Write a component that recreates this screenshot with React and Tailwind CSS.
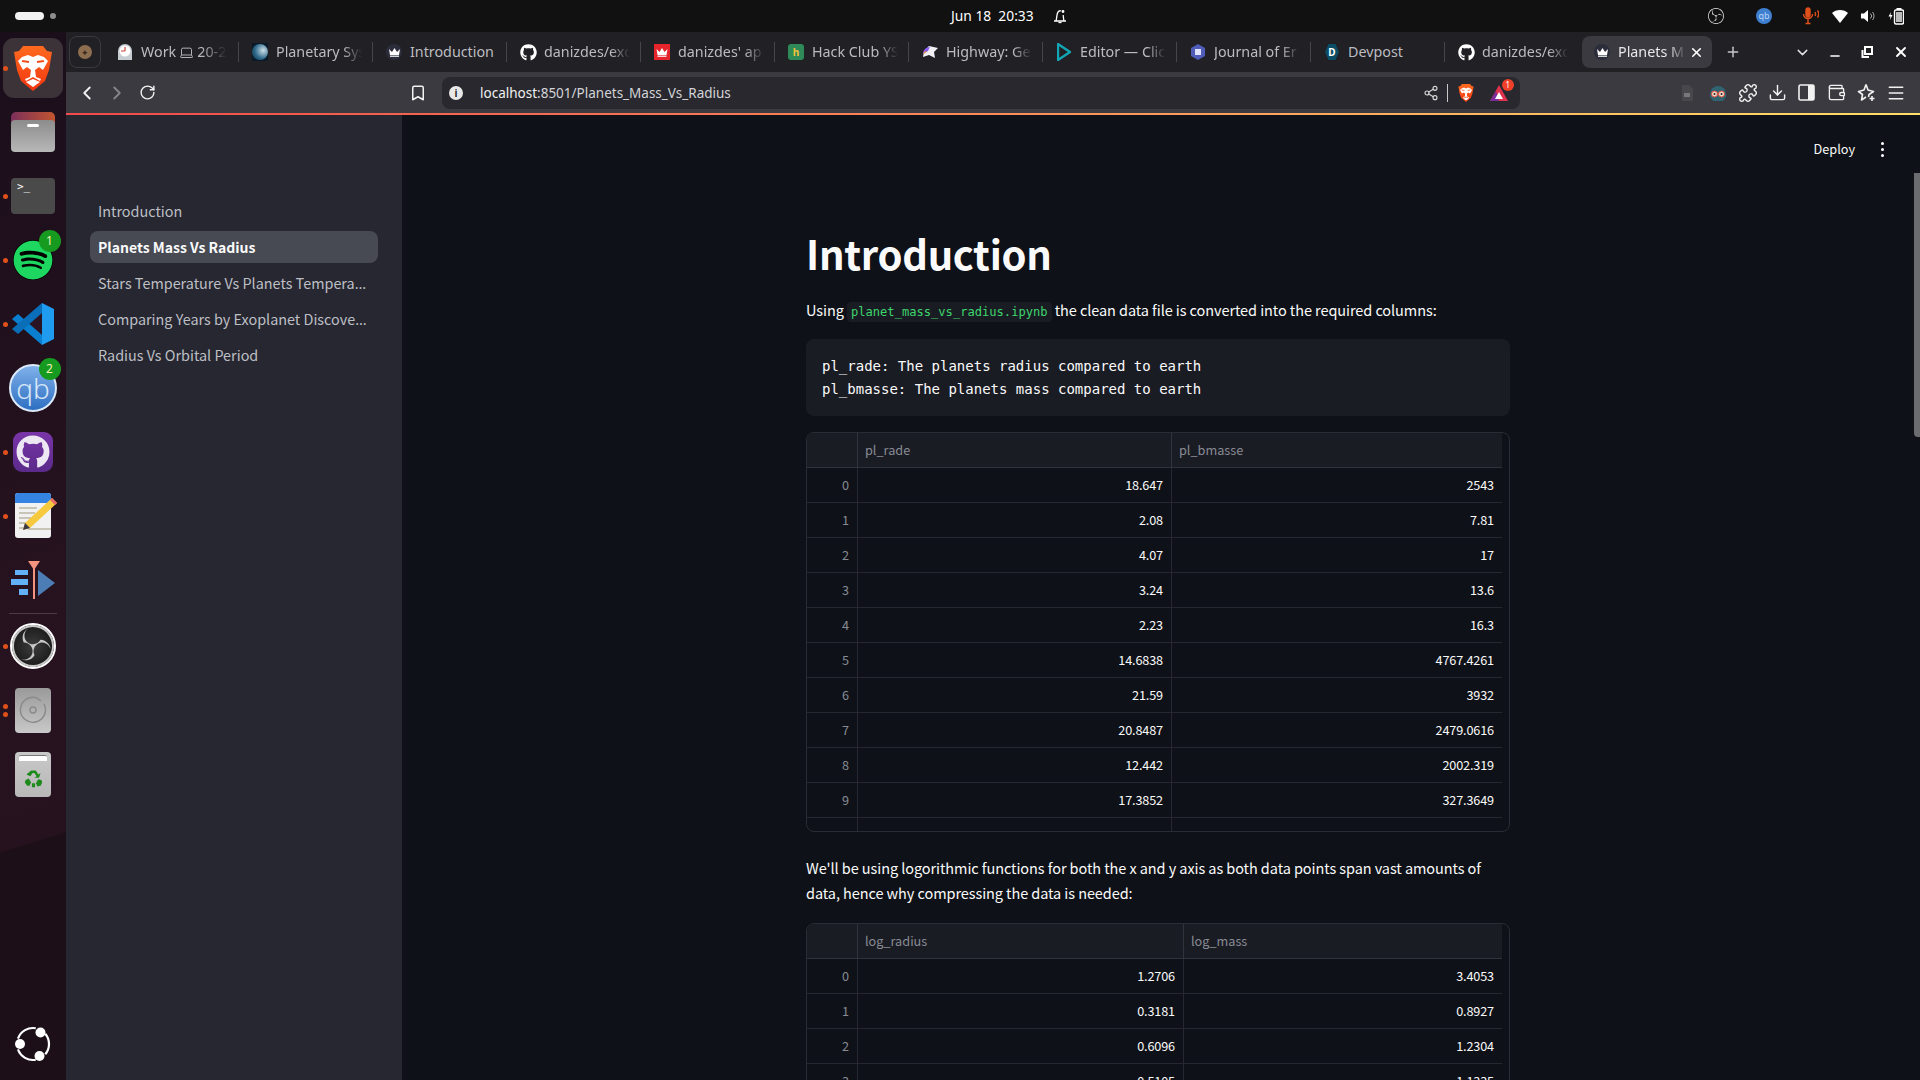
import {
  Bookmark, ChevronDown, ChevronLeft, ChevronRight, Download, Laptop, Menu, Minus, Plus, Puzzle, RotateCw, Share2, Wallet, X,
} from "lucide-react";
import { FaGithub, FaSpotify } from "react-icons/fa";
import { SiObsstudio } from "react-icons/si";

const uiFont = "font-['Noto_Sans','Open_Sans',sans-serif]";
const pageFont = "font-['Noto_Sans_CJK_SC','Noto_Sans',sans-serif]";
const monoFont = "font-['DejaVu_Sans_Mono','Liberation_Mono',monospace]";

const BraveLion = ({ size = 40 }) => (
  <svg width={size} height={size * 1.125} viewBox="0 0 40 45">
    <defs>
      <linearGradient id="brv" x1="0" y1="0" x2="0" y2="1">
        <stop offset="0" stopColor="#ff6a1f" />
        <stop offset="1" stopColor="#f2350f" />
      </linearGradient>
    </defs>
    <path d="M10 0H30L34 5L39 6L36 24L32 35L20 45L8 35L4 24L1 6L6 5Z" fill="url(#brv)" />
    <path d="M9 11L15 9L20 11L25 9L31 11L35 15L30 24L26 21L22 24L23 31L28 33L27 35L20 31L13 35L12 33L17 31L18 24L14 21L10 24L5 15Z" fill="#fff" />
    <path d="M13 36L20 33L27 36L20 41Z" fill="#fff" />
    <path d="M9 15L16 16M31 15L24 16" stroke="#f2501a" strokeWidth="2" />
  </svg>
);

const CrownIcon = ({ bg = "#2b2d3a" }) => (
  <span className="w-4 h-4 rounded-full flex items-center justify-center" style={{ backgroundColor: bg }}>
    <svg width="11" height="9" viewBox="0 0 11 9">
      <path d="M0 1L3 4L5.5 0L8 4L11 1L10 7H1Z" fill="#fff" />
      <rect x="1" y="7.6" width="9" height="1.2" fill="#fff" />
    </svg>
  </span>
);

const FavClock = () => (
  <svg width="16" height="18" viewBox="0 0 16 18">
    <path d="M1 17V8a7 7 0 0 1 14 0v9Z" fill="#c6cdd2" />
    <circle cx="8" cy="8" r="5.5" fill="#fff" />
    <path d="M8 8V4M8 8H4" stroke="#d0413c" strokeWidth="1.2" />
  </svg>
);

const FavPlanet = () => (
  <span className="w-4 h-[18px] bg-[#0b1a28] flex items-center justify-center">
    <span className="w-4 h-4 rounded-full bg-[radial-gradient(circle_at_70%_40%,#cfe0e6,#2f6b8c_55%,#0d2a3f)]" />
  </span>
);

const FavDanizdes = () => (
  <span className="w-4 h-4 bg-[#e5242b] flex items-center justify-center">
    <svg width="12" height="9" viewBox="0 0 11 9">
      <path d="M0 1L3 4L5.5 0L8 4L11 1L10 7H1Z" fill="#fff" />
      <rect x="1" y="7.6" width="9" height="1.2" fill="#fff" />
    </svg>
  </span>
);

const FavHackClub = () => (
  <span className="w-4 h-4 rounded-[3px] bg-[#2e8b57] flex items-center justify-center text-[#f3c23c] text-[10px] font-bold leading-none">h</span>
);

const FavHighway = () => (
  <svg width="16" height="14" viewBox="0 0 16 14">
    <path d="M7 1L16 3L12 7L13 13L7 10L1 12L2 6Z" fill="#f0f0f5" />
    <path d="M1 9C1 5 4 2 8 2L6 6L3 8Z" fill="#8b5cf6" />
    <path d="M1 9C2 7 3 6 5 6L3 8Z" fill="#f59e0b" />
  </svg>
);

const FavEditor = () => (
  <svg width="14" height="18" viewBox="0 0 14 18">
    <path d="M1 1L13 9L1 17Z" fill="none" stroke="#12a5b5" strokeWidth="2.4" strokeLinejoin="round" />
  </svg>
);

const FavJournal = () => (
  <svg width="14" height="16" viewBox="0 0 14 16">
    <path d="M7 0L14 4V12L7 16L0 12V4Z" fill="#4f5cb8" />
    <rect x="4" y="5" width="6" height="6" fill="#dfe3ff" />
  </svg>
);

const FavDevpost = () => (
  <span className="relative w-[14px] h-4 flex items-center justify-center">
    <svg className="absolute inset-0" width="14" height="16" viewBox="0 0 14 16">
      <path d="M3.5 0H10.5L14 8L10.5 16H3.5L0 8Z" fill="#0b4d66" />
    </svg>
    <span className="relative text-white text-[10px] font-bold leading-none">D</span>
  </span>
);

const tabs = [
  { title: "Planetary Sys", icon: <FavPlanet /> },
  { title: "Introduction", icon: <CrownIcon />, full: true },
  { title: "danizdes/exo", icon: <FaGithub size={17} color="#fff" /> },
  { title: "danizdes' ap", icon: <FavDanizdes /> },
  { title: "Hack Club YS", icon: <FavHackClub /> },
  { title: "Highway: Ge", icon: <FavHighway /> },
  { title: "Editor — Clic", icon: <FavEditor /> },
  { title: "Journal of Er", icon: <FavJournal /> },
  { title: "Devpost", icon: <FavDevpost />, full: true },
  { title: "danizdes/exo", icon: <FaGithub size={17} color="#fff" /> },
];

const sidebarLinks = [
  { label: "Introduction" },
  { label: "Planets Mass Vs Radius", active: true },
  { label: "Stars Temperature Vs Planets Tempera", cut: true },
  { label: "Comparing Years by Exoplanet Discove", cut: true },
  { label: "Radius Vs Orbital Period" },
];

const massRows = [
  ["18.647", "2543"], ["2.08", "7.81"], ["4.07", "17"], ["3.24", "13.6"], ["2.23", "16.3"],
  ["14.6838", "4767.4261"], ["21.59", "3932"], ["20.8487", "2479.0616"], ["12.442", "2002.319"], ["17.3852", "327.3649"],
];

const logRows = [
  ["1.2706", "3.4053"], ["0.3181", "0.8927"], ["0.6096", "1.2304"], ["0.5105", "1.1335"],
];

const DataTable = ({ headers, rows, firstCol }) => (
  <div className="h-[400px] w-full border border-[#2a2c35] rounded-lg overflow-hidden text-[12.7px] leading-[20px] flex flex-col">
    <div className="flex w-[695px] h-[35px] shrink-0 bg-[#1a1c24] border-b border-[#31333c] text-[#888b93]">
      <div className="w-[51px] border-r border-[#31333c]" />
      <div className={`${firstCol} border-r border-[#31333c] pl-[7px] flex items-center`}>{headers[0]}</div>
      <div className="flex-1 pl-[7px] flex items-center">{headers[1]}</div>
    </div>
    {rows.map((row, i) => (
      <div key={i} className="flex w-[695px] h-[35px] shrink-0 border-b border-[#262730] text-[#fafafa] tracking-[-0.15px]">
        <div className="w-[51px] border-r border-[#262730] px-2 flex items-center justify-end text-[#888b93]">{i}</div>
        <div className={`${firstCol} border-r border-[#262730] px-2 flex items-center justify-end`}>{row[0]}</div>
        <div className="flex-1 px-2 flex items-center justify-end">{row[1]}</div>
      </div>
    ))}
    <div className="flex w-[695px] flex-1">
      <div className="w-[51px] border-r border-[#262730]" />
      <div className={`${firstCol} border-r border-[#262730]`} />
    </div>
  </div>
);

const DockCell = ({ running, twoDots, children }) => (
  <div className="relative h-[64px] w-full shrink-0 flex items-center justify-center">
    {running && <span className="absolute left-[3px] top-1/2 -mt-[2.5px] w-[5px] h-[5px] rounded-full bg-[#e1501a]" />}
    {twoDots && (
      <span className="absolute left-[3px] top-1/2 -mt-[6.5px] flex flex-col gap-[3px]">
        <span className="w-[5px] h-[5px] rounded-full bg-[#e1501a]" />
        <span className="w-[5px] h-[5px] rounded-full bg-[#e1501a]" />
      </span>
    )}
    {children}
  </div>
);

const DockBadge = ({ n }) => (
  <span className={`absolute left-[38.5px] top-[2px] w-[22px] h-[22px] rounded-full bg-[#169a1f] text-[#f4f0b0] text-[12px] flex items-center justify-center ${uiFont}`}>{n}</span>
);

const Dock = () => (
  <div className="w-[66px] shrink-0 flex flex-col items-center pt-[4px] bg-[linear-gradient(163deg,#1b0e1b_0%,#27131f_60%,#25121e_76.7%,#1d0f17_76.9%,#1d0f17_100%)]">
    <DockCell running>
      <div className="w-[60px] h-[60px] rounded-[11px] bg-[#3b3338] flex items-center justify-center">
        <BraveLion />
      </div>
    </DockCell>
    <DockCell>
      <div className="relative w-[44px] h-[40px]">
        <div className="absolute top-0 left-0 w-[44px] h-[24px] rounded-t-[5px] bg-[linear-gradient(90deg,#7b2f5b,#c2552f)]" />
        <div className="absolute top-[8px] left-0 w-[44px] h-[32px] rounded-[4px] bg-[linear-gradient(#8c8c8c,#b8b8b8)] flex justify-center pt-[4px]">
          <span className="w-[12px] h-[3px] rounded-sm bg-white" />
        </div>
      </div>
    </DockCell>
    <DockCell running>
      <div className={`w-[44px] h-[36px] rounded-[4px] bg-[#4a4a4a] text-white text-[11px] leading-[14px] pl-[6px] pt-[2px] ${monoFont}`}>&gt;_</div>
    </DockCell>
    <DockCell running>
      <FaSpotify size={40} color="#1ed760" className="bg-black rounded-full" />
      <DockBadge n="1" />
    </DockCell>
    <DockCell running>
      <svg width="42" height="42" viewBox="0 0 42 42">
        <path d="M30 10L14 21L30 32Z" fill="#2a1424" />
        <path d="M6 11L30 32V42L0 16Z" fill="#0a7fcf" />
        <path d="M0 26L30 0V10L6 31Z" fill="#0a6fb8" />
        <path d="M30 0L42 6V36L30 42Z" fill="#1f9cf0" />
      </svg>
    </DockCell>
    <DockCell>
      <div className={`w-[48px] h-[48px] rounded-full border-2 border-[#dbe9f8] bg-[linear-gradient(#7fb0ea,#2e6fc2)] flex items-center justify-center text-[#d6e6f8] text-[28px] font-light leading-none ${uiFont}`}>qb</div>
      <DockBadge n="2" />
    </DockCell>
    <DockCell running>
      <div className="w-[40px] h-[40px] rounded-[9px] bg-[linear-gradient(#7a35a8,#5a2a8a)] flex items-center justify-center">
        <FaGithub size={34} color="#ece7f2" />
      </div>
    </DockCell>
    <DockCell running>
      <svg className="ml-[6px]" width="44" height="46" viewBox="0 0 44 46">
        <rect x="1" y="0" width="36" height="45" rx="3" fill="#f1f1f1" />
        <path d="M1 10V3a3 3 0 0 1 3-3h30a3 3 0 0 1 3 3v7Z" fill="#3584e4" />
        <path d="M5 15H23M5 20H21M5 25H19M5 30H15M5 35H12M14 36H37" stroke="#c9c5b6" strokeWidth="2" />
        <path d="M38 5L43 10L16 35L9 37L11 30Z" fill="#f7c93e" />
        <path d="M38 5L43 10L41 12L36 7Z" fill="#ed6a6a" />
        <path d="M9 37L11 30L16 35Z" fill="#3d3846" />
      </svg>
    </DockCell>
    <DockCell>
      <svg width="46" height="38" viewBox="0 0 46 38">
        <path d="M18 0H30L24 9Z" fill="#f4937e" />
        <rect x="23" y="2" width="2" height="36" fill="#f4937e" />
        <path d="M5 9H18V14H5ZM1 18H18V24H1ZM9 28H18V34H9Z" fill="#62b0f5" />
        <path d="M28 9L45 22L28 35Z" fill="#4d7db5" />
      </svg>
    </DockCell>
    <div className="mt-px w-[48px] h-px bg-[#4a3a46] shrink-0" />
    <DockCell running>
      <div className="w-[46px] h-[46px] rounded-full border-2 border-white bg-[radial-gradient(circle,#3c3c3c,#0d0d0d)] flex items-center justify-center">
        <SiObsstudio size={42} color="#c8c8c8" />
      </div>
    </DockCell>
    <DockCell twoDots>
      <div className="w-[36px] h-[45px] rounded-[4px] bg-[linear-gradient(#9a9a9a,#c8c8c8)] flex items-center justify-center">
        <svg width="28" height="28" viewBox="0 0 28 28" fill="none" stroke="#8a8a8a" strokeWidth="1.4">
          <path d="M18 2A12.5 12.5 0 1 0 25 8M18 2L22 5" />
          <circle cx="14" cy="14" r="3" />
        </svg>
      </div>
    </DockCell>
    <DockCell>
      <div className="w-[36px] h-[45px] rounded-[4px] bg-[linear-gradient(#c8c8c8,#b8b8b8)] flex flex-col items-center">
        <span className="w-[28px] h-[6px] mt-[3px] bg-white rounded-t-[2px] border-t border-[#777]" />
        <svg className="mt-[8px]" width="19" height="19" viewBox="0 0 24 24" fill="#1f8a1c">
          <path d="M9 2H15L18 7L21 5L19 11L13 11L16 9L13 5H11L8 9L3 7ZM2 14L6 12L9 17L7 21H4L1 17ZM22 14L18 13L15 18L17 22L21 21L23 17ZM10 18H14V23H10Z" />
        </svg>
      </div>
    </DockCell>
    <div className="mt-auto mb-[18px] w-[36px] h-[36px]">
      <svg width="36" height="36" viewBox="0 0 36 36" fill="none" stroke="#fff" strokeWidth="2.2">
        <path d="M2.96 12.53A16 16 0 0 1 20.78 2.24" />
        <path d="M30.26 7.71A16 16 0 0 1 30.26 28.29" />
        <path d="M20.78 33.76A16 16 0 0 1 2.96 23.47" />
        <circle cx="5" cy="18" r="5" fill="#fff" stroke="none" />
        <circle cx="25.5" cy="6.5" r="5" fill="#fff" stroke="none" />
        <circle cx="24.5" cy="30" r="5" fill="#fff" stroke="none" />
      </svg>
    </div>
  </div>
);

const TopBar = () => (
  <div className={`h-8 shrink-0 bg-[#111111] flex items-center text-white ${uiFont}`}>
    <div className="w-[66px] flex items-center pl-[15px] gap-[6px]">
      <span className="w-[29px] h-[8px] rounded-full bg-[#f2f2f2]" />
      <span className="w-[6px] h-[6px] rounded-full bg-[#8c8c8c]" />
    </div>
    <div className="ml-[885px] w-[84px] text-[13.8px] leading-[20px] whitespace-pre">Jun 18  20:33</div>
    <svg className="ml-[17px]" width="16" height="16" viewBox="0 0 16 16" fill="none" stroke="#fff" strokeWidth="1.3">
      <path d="M2 13H14M4 13C5 10 4.5 6 6 4C7 2.6 8 2.5 9 3M12 13C11.4 11 11.4 9 11.2 7" />
      <circle cx="11" cy="3.5" r="0.8" fill="#fff" />
      <path d="M6.5 14.5H9.5" />
    </svg>
    <SiObsstudio className="ml-[640px]" size={16} color="#e8e8e8" />
    <span className="ml-[32px] w-4 h-4 rounded-full bg-[#3f7fd0] text-[#b9d4f3] text-[9px] flex items-center justify-center">qb</span>
    <svg className="ml-[29px]" width="18" height="18" viewBox="0 0 18 18" fill="none" stroke="#e1501a" strokeWidth="1.4">
      <rect x="5" y="1" width="4" height="9" rx="2" fill="#e1501a" />
      <path d="M2.5 7a4.5 4.5 0 0 0 9 0M7 11.5V16M4.5 16.5H9.5M14 5a4 4 0 0 1 0 4M16.5 3.5a6 6 0 0 1 0 7" />
    </svg>
    <svg className="ml-[13px]" width="16" height="14" viewBox="0 0 16 14">
      <path d="M0 4C4 0 12 0 16 4L8 14Z" fill="#fff" />
    </svg>
    <svg className="ml-[13px]" width="15" height="14" viewBox="0 0 15 14" fill="none">
      <path d="M0 4.5H3L7 1V13L3 9.5H0Z" fill="#fff" />
      <path d="M9.5 4.5a3.5 3.5 0 0 1 0 5M11.5 3a6 6 0 0 1 0 8" stroke="#aaa" strokeWidth="1" />
    </svg>
    <svg className="ml-[12px]" width="16" height="18" viewBox="0 0 16 18" fill="none">
      <path d="M3 5L0.5 9.5H2.5L2 13L4.5 8H2.5Z" fill="#fff" />
      <rect x="6.5" y="3" width="9" height="14" rx="1.5" stroke="#fff" strokeWidth="1.4" />
      <rect x="8.5" y="1" width="5" height="2" fill="#fff" />
      <rect x="8" y="5" width="6" height="10" fill="#bbb" />
    </svg>
  </div>
);

const TabStrip = () => (
  <div className={`h-10 shrink-0 bg-[#202025] flex items-center ${uiFont}`}>
    <div className="ml-[3px] w-[32px] h-[32px] rounded-lg border border-[#3a3a40] flex items-center justify-center">
      <span className="w-[14px] h-[14px] rounded-full bg-[#8d6e4f] flex items-center justify-center text-[#3a2a1c] text-[9px] leading-none">✦</span>
    </div>
    <div className="w-[137px] shrink-0 h-5 flex items-center pl-[14px]">
      <span className="w-5 flex justify-center shrink-0"><FavClock /></span>
      <span className="ml-[6px] w-[86px] overflow-hidden flex items-center whitespace-nowrap text-[14.3px] leading-5 text-[#bcbcc0] [mask-image:linear-gradient(90deg,#000_70%,transparent)]">
        Work <Laptop className="mx-[3px] shrink-0" size={15} color="#bcbcc0" strokeWidth={1.5} /> 20-2
      </span>
    </div>
    {tabs.map((tab, i) => (
      <div key={i} className="w-[134px] shrink-0 h-5 flex items-center border-l border-[#45454b] pl-[11px]">
        <span className="w-5 flex justify-center shrink-0">{tab.icon}</span>
        <span className={`ml-[6px] w-[86px] overflow-hidden whitespace-nowrap text-[14.3px] leading-5 text-[#bcbcc0] ${tab.full ? "" : "[mask-image:linear-gradient(90deg,#000_78%,transparent)]"}`}>{tab.title}</span>
      </div>
    ))}
    <div className="ml-[4px] w-[130px] shrink-0 h-[32px] rounded-lg bg-[#3a3a40] flex items-center pl-[12px]">
      <span className="w-4 flex justify-center shrink-0"><CrownIcon /></span>
      <span className="ml-[8px] w-[68px] overflow-hidden whitespace-nowrap text-[14.3px] leading-5 text-[#e8e8ea] [mask-image:linear-gradient(90deg,#000_75%,transparent)]">Planets M</span>
      <X className="ml-[3px]" size={15} color="#fff" strokeWidth={2.5} />
    </div>
    <Plus className="ml-[13px]" size={16} color="#c8c8cc" strokeWidth={2.2} />
    <ChevronDown className="ml-[53px]" size={17} color="#e0e0e0" strokeWidth={2} />
    <Minus className="ml-[17px] mt-[8px]" size={14} color="#fff" strokeWidth={2.4} />
    <svg className="ml-[19px]" width="12" height="12" viewBox="0 0 12 12" fill="none" stroke="#fff" strokeWidth="2">
      <rect x="4" y="1" width="7" height="7" />
      <path d="M1.5 4V11H8" />
    </svg>
    <X className="ml-[20px]" size={16} color="#fff" strokeWidth={2.8} />
  </div>
);

const Toolbar = () => (
  <div className={`h-[41px] shrink-0 bg-[#3a3a40] flex items-center ${uiFont}`}>
    <ChevronLeft className="ml-[10px]" size={22} color="#f2f2f2" strokeWidth={2} />
    <ChevronRight className="ml-[8px]" size={22} color="#85858a" strokeWidth={2} />
    <RotateCw className="ml-[11px]" size={17} color="#f2f2f2" strokeWidth={2} />
    <Bookmark className="ml-[253px]" size={18} color="#f2f2f2" strokeWidth={2} />
    <div className="ml-[15px] w-[1078px] h-[32px] rounded-lg bg-[#28282e] flex items-center">
      <span className="ml-[7px] w-[14px] h-[14px] rounded-full bg-[#e8e8e8] flex items-center justify-center text-[#28282e] text-[10px] font-bold leading-none">i</span>
      <span className="ml-[17px] text-[13.5px] leading-5 whitespace-nowrap text-[#d4d4d8]">
        <span className="text-[#f0f0f0]">localhost</span>:8501/Planets_Mass_Vs_Radius
      </span>
      <Share2 className="ml-[692px]" size={16} color="#d8d8d8" strokeWidth={1.7} />
      <span className="ml-[8px] w-px h-[18px] bg-[#c8c8c8]" />
      <span className="ml-[10px] flex"><BraveLion size={16} /></span>
      <span className="relative ml-[16px] flex">
        <svg width="18" height="16" viewBox="0 0 18 16">
          <path d="M9 0L18 16H0Z" fill="#e0324f" />
          <path d="M0 16L6 6L9 16Z" fill="#7a2a9a" />
          <path d="M9 7L13 14H5Z" fill="#fff" />
        </svg>
        <span className="absolute -right-[6px] -top-[6px] w-3 h-3 rounded-full bg-[#f0402a] text-white text-[8px] flex items-center justify-center leading-none">1</span>
      </span>
    </div>
    <svg className="ml-[161px]" width="12" height="16" viewBox="0 0 12 16">
      <path d="M1 0H8L12 4V16H1Z" fill="#47474c" />
      <rect x="3" y="8" width="6" height="4" fill="#77777c" />
    </svg>
    <svg className="ml-[16px]" width="18" height="18" viewBox="0 0 18 18">
      <path d="M1 10a8 8 0 0 1 16 0v3l-3 4H4L1 13Z" fill="#2f6470" />
      <circle cx="5.5" cy="10" r="3" fill="#f3d9c9" stroke="#e0483a" />
      <circle cx="12.5" cy="10" r="3" fill="#f3d9c9" stroke="#e0483a" />
      <circle cx="5.5" cy="10" r="1" fill="#222" />
      <circle cx="12.5" cy="10" r="1" fill="#222" />
    </svg>
    <Puzzle className="ml-[11px]" size={20} color="#f2f2f2" strokeWidth={1.7} />
    <Download className="ml-[10px]" size={19} color="#f2f2f2" strokeWidth={1.8} />
    <svg className="ml-[11px]" width="17" height="17" viewBox="0 0 17 17">
      <rect x="1" y="1" width="15" height="15" rx="1.5" fill="none" stroke="#f2f2f2" strokeWidth="1.6" />
      <rect x="10" y="1" width="6" height="15" fill="#f2f2f2" />
    </svg>
    <Wallet className="ml-[12px]" size={19} color="#f2f2f2" strokeWidth={1.7} />
    <svg className="ml-[11px]" width="19" height="19" viewBox="0 0 19 19" fill="none" stroke="#f2f2f2" strokeWidth="1.6" strokeLinejoin="round">
      <path d="M9 1.5L11 7L16.5 8.5L12 11.5L11.5 14M9 1.5L7 7L1.5 8.5L5.5 11.5L4.5 17L9 14" />
      <path d="M15 13V18M12.5 15.5H17.5" />
    </svg>
    <Menu className="ml-[10px]" size={20} color="#f2f2f2" strokeWidth={1.8} />
  </div>
);

const Sidebar = () => (
  <div className={`w-[336px] shrink-0 bg-[#262730] pt-[80px] px-[24px] ${pageFont}`}>
    {sidebarLinks.map((link) => (
      <div
        key={link.label}
        className={`h-[32px] mb-[4px] rounded-lg flex items-center pl-2 leading-5 whitespace-nowrap ${link.active ? "bg-[#474953] text-[#fafafa] font-semibold text-[14px]" : "text-[#bdbfc5] text-[14.4px]"}`}
      >
        <span>
          {link.label}
          {link.cut && <span className={uiFont}>…</span>}
        </span>
      </div>
    ))}
  </div>
);

const MainArea = () => (
  <div className={`relative flex-1 bg-[#0e1117] overflow-hidden ${pageFont}`}>
    <div className="flex items-center justify-end h-[68px] pr-[36px] gap-[26px] text-[12.7px] leading-5 text-[#fafafa]">
      <span>Deploy</span>
      <span className="flex flex-col gap-[3px]">
        <span className="w-[3px] h-[3px] rounded-full bg-white" />
        <span className="w-[3px] h-[3px] rounded-full bg-white" />
        <span className="w-[3px] h-[3px] rounded-full bg-white" />
      </span>
    </div>
    <div className="w-[704px] ml-[404px] text-[#fafafa]">
      <h1 className="mt-[41px] text-[40px] leading-[58px] font-bold tracking-[-0.3px]">Introduction</h1>
      <p className="mt-[16px] h-[24px] text-[14.5px] leading-[24px] tracking-[-0.08px] whitespace-nowrap">
        Using{" "}
        <code className={`px-[4px] py-[3px] rounded bg-[#1a1c24] text-[#3dd56d] text-[12.1px] tracking-normal ${monoFont}`}>planet_mass_vs_radius.ipynb</code>{" "}
        the clean data file is converted into the required columns:
      </p>
      <pre className={`mt-[17px] h-[77px] rounded-lg bg-[#1a1c24] px-4 pt-[16px] text-[14px] leading-[23px] text-[#fafafa] ${monoFont}`}>
        pl_rade: The planets radius compared to earth{"\n"}pl_bmasse: The planets mass compared to earth
      </pre>
      <div className="mt-[16px]">
        <DataTable headers={["pl_rade", "pl_bmasse"]} rows={massRows} firstCol="w-[314px]" />
      </div>
      <p className="mt-[23px] text-[14.5px] leading-[25px] tracking-[-0.08px]">
        We'll be using logorithmic functions for both the x and y axis as both data points span vast amounts of data, hence why compressing the data is needed:
      </p>
      <div className="mt-[18px]">
        <DataTable headers={["log_radius", "log_mass"]} rows={logRows} firstCol="w-[326px]" />
      </div>
    </div>
    <div className="absolute right-0 top-[58px] w-[6px] h-[264px] rounded-bl bg-[#6b6c70]" />
  </div>
);

const App = () => (
  <div className="w-screen h-screen overflow-hidden flex flex-col bg-[#111111]">
    <TopBar />
    <div className="flex flex-1 min-h-0">
      <Dock />
      <div className="flex-1 min-w-0 flex flex-col">
        <TabStrip />
        <Toolbar />
        <div className="h-[2px] shrink-0 bg-[linear-gradient(90deg,#f04a4a,#fb8c5a_50%,#ffe066)]" />
        <div className="flex flex-1 min-h-0">
          <Sidebar />
          <MainArea />
        </div>
      </div>
    </div>
  </div>
);

export default App;
